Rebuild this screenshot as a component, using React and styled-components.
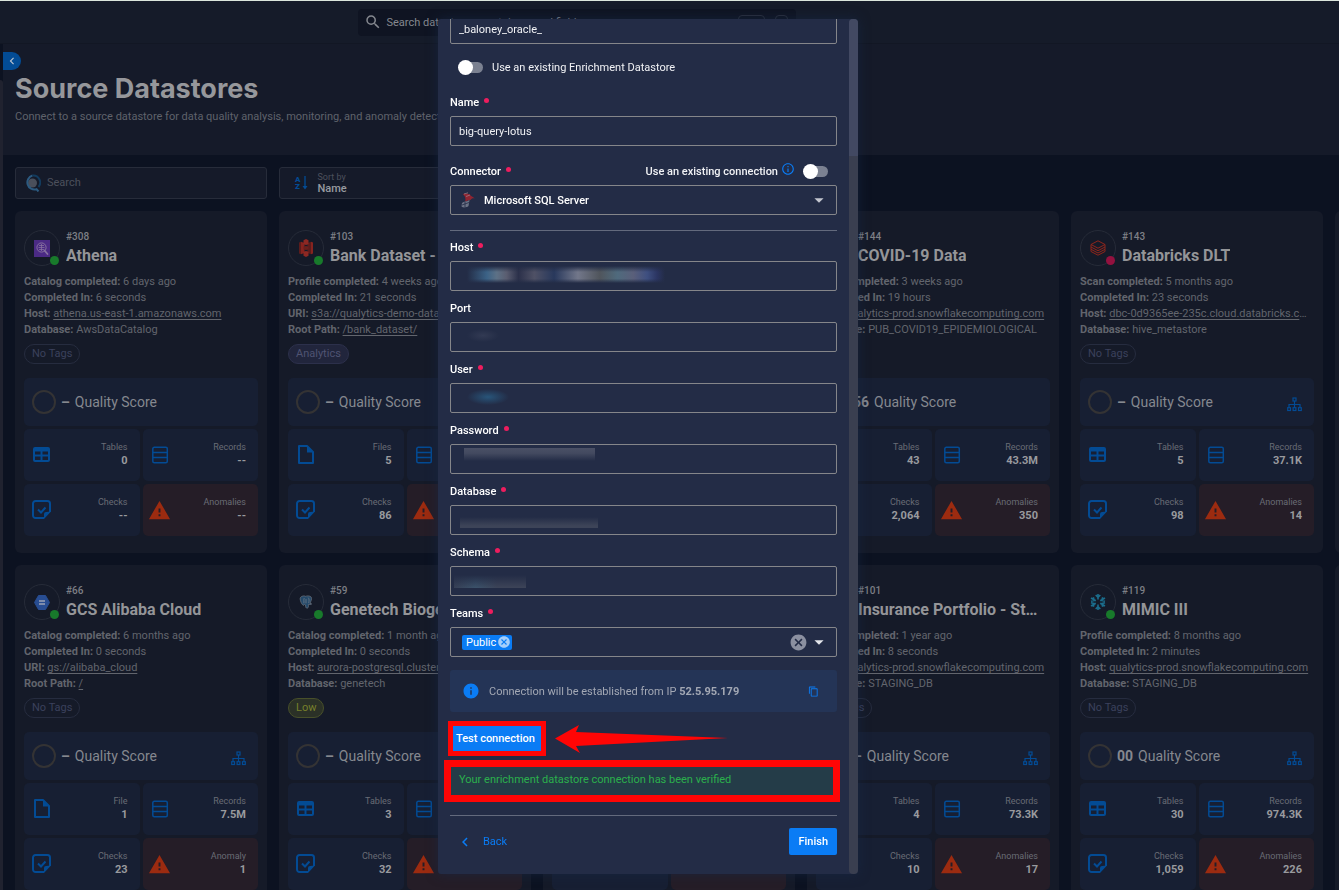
import React, { useState } from 'react'
import styled, { createGlobalStyle, css } from 'styled-components'
import {
  MdArrowDropDown,
  MdCancel,
  MdChevronLeft,
  MdContentCopy,
  MdInfo,
  MdInfoOutline,
  MdSearch,
  MdWarning,
} from 'react-icons/md'

const datastores = [
  {
    id: 308, name: 'Athena', logo: 'athena', status: 'ok', action: 'Catalog', when: '6 days ago', took: '6 seconds',
    lines: [['Host', 'athena.us-east-1.amazonaws.com', true], ['Database', 'AwsDataCatalog']],
    tag: 'No Tags', score: '–', tables: ['Tables', '0'], records: '--', checks: '--', anomalies: ['Anomalies', '--'],
  },
  {
    id: 103, name: 'Bank Dataset - Staging', logo: 's3', status: 'ok', action: 'Profile', when: '4 weeks ago', took: '21 seconds',
    lines: [['URI', 's3a://qualytics-demo-data', true], ['Root Path', '/bank_dataset/', true]],
    tag: 'Analytics', tagKind: 'analytics', score: '–', tables: ['Files', '5'], records: '2.6M', checks: '86', anomalies: ['Anomalies', '12'],
  },
  {
    id: 144, name: 'Consolidated Balance', logo: 'snowflake', status: 'ok', action: 'Profile', when: '3 weeks ago', took: '2 hours',
    lines: [['Host', 'qualytics-prod.snowflakecomputing.com', true], ['Database', 'STAGING_DB']],
    tag: 'No Tags', score: '–', tables: ['Tables', '8'], records: '3.2M', checks: '412', anomalies: ['Anomalies', '9'],
  },
  {
    id: 144, name: 'COVID-19 Data', logo: 'snowflake', status: 'ok', action: 'Scan', when: '3 weeks ago', took: '19 hours',
    lines: [['Host', 'qualytics-prod.snowflakecomputing.com', true], ['Database', 'PUB_COVID19_EPIDEMIOLOGICAL']],
    score: '56', tables: ['Tables', '43'], records: '43.3M', checks: '2,064', anomalies: ['Anomalies', '350'],
  },
  {
    id: 143, name: 'Databricks DLT', logo: 'databricks', status: 'error', action: 'Scan', when: '5 months ago', took: '23 seconds',
    lines: [['Host', 'dbc-0d9365ee-235c.cloud.databricks.com', true], ['Database', 'hive_metastore']],
    tag: 'No Tags', score: '–', linked: true, tables: ['Tables', '5'], records: '37.1K', checks: '98', anomalies: ['Anomalies', '14'],
  },
  null,
  {
    id: 66, name: 'GCS Alibaba Cloud', logo: 'gcs', status: 'ok', action: 'Catalog', when: '6 months ago', took: '0 seconds',
    lines: [['URI', 'gs://alibaba_cloud', true], ['Root Path', '/', true]],
    tag: 'No Tags', score: '–', linked: true, tables: ['File', '1'], records: '7.5M', checks: '23', anomalies: ['Anomaly', '1'],
  },
  {
    id: 59, name: 'Genetech Biogeniuses', logo: 'postgres', status: 'ok', action: 'Catalog', when: '1 month ago', took: '0 seconds',
    lines: [['Host', 'aurora-postgresql.cluster', true], ['Database', 'genetech']],
    tag: 'Low', tagKind: 'low', score: '–', tables: ['Tables', '3'], records: '1.1M', checks: '32', anomalies: ['Anomalies', '4'],
  },
  {
    id: 101, name: 'Human Resources', logo: 'snowflake', status: 'ok', action: 'Profile', when: '1 year ago', took: '5 seconds',
    lines: [['Host', 'qualytics-prod.snowflakecomputing.com', true], ['Database', 'STAGING_DB']],
    tag: 'No Tags', score: '–', tables: ['Tables', '2'], records: '9.4K', checks: '36', anomalies: ['Anomalies', '7'],
  },
  {
    id: 101, name: 'Insurance Portfolio - Staging', logo: 'snowflake', status: 'ok', action: 'Scan', when: '1 year ago', took: '8 seconds',
    lines: [['Host', 'qualytics-prod.snowflakecomputing.com', true], ['Database', 'STAGING_DB']],
    tag: 'No Tags', score: '–', linked: true, tables: ['Tables', '4'], records: '73.3K', checks: '10', anomalies: ['Anomalies', '17'],
  },
  {
    id: 119, name: 'MIMIC III', logo: 'snowflake', status: 'ok', action: 'Profile', when: '8 months ago', took: '2 minutes',
    lines: [['Host', 'qualytics-prod.snowflakecomputing.com', true], ['Database', 'STAGING_DB']],
    tag: 'No Tags', score: '00', linked: true, tables: ['Tables', '30'], records: '974.3K', checks: '1,059', anomalies: ['Anomalies', '226'],
  },
  null,
]

const credentials = [
  { name: 'Host', required: true, mask: 'host' },
  { name: 'Port', mask: 'port' },
  { name: 'User', required: true, mask: 'user' },
  { name: 'Password', required: true, mask: 'password' },
  { name: 'Database', required: true, mask: 'database' },
  { name: 'Schema', required: true, mask: 'schema' },
]

const Logo = ({ kind }) => {
  if (kind === 'athena') {
    return (
      <svg width="16" height="17" viewBox="0 0 16 17" fill="none">
        <rect width="16" height="17" fill="#4b2a85" />
        <circle cx="7.5" cy="7.5" r="4.6" stroke="#86719f" />
        <path d="M5 5.5h5M4.5 7.5h6M5 9.5h5M7.5 4v7" stroke="#86719f" strokeWidth="0.8" />
        <path d="m10.5 10.5 3 3.5" stroke="#86719f" strokeWidth="1.8" strokeLinecap="round" />
      </svg>
    )
  }
  if (kind === 's3') {
    return (
      <svg width="16" height="18" viewBox="0 0 16 18">
        <path d="M1 3.5 3 2.8v12.4l-2-.7z" fill="#5c1c1c" />
        <path d="M3 2.8 6.5 4v10L3 15.2z" fill="#86231f" />
        <path d="m13 2.8 2 .7v11l-2 .7z" fill="#86231f" />
        <path d="M13 2.8 9.500 4v10l3.500 1.200z" fill="#5c1c1c" />
        <path d="M8 0 5.500 1.200v4L8 6l2.500-.8v-4z" fill="#8d2823" />
        <path d="m8 7-2.500.5v3L8 11l2.500-.5v-3z" fill="#6b1f1d" />
        <path d="m8 12-2.500.8v4L8 18l2.500-1.200v-4z" fill="#8d2823" />
      </svg>
    )
  }
  if (kind === 'databricks') {
    return (
      <svg width="16" height="16" viewBox="0 0 16 16" fill="none" stroke="#8f261c" strokeWidth="1">
        <path d="M1 4.500 8 .8l7 3.700-7 3.700z" />
        <path d="M1 4.500v2.500l7 3.700 7-3.700V4.500" />
        <path d="M1 7v2.300l7 3.700 7-3.700V7" />
        <path d="M1 9.300v2.200l7 3.700 7-3.700V9.300" />
      </svg>
    )
  }
  if (kind === 'gcs') {
    return (
      <svg width="16" height="15" viewBox="0 0 16 15">
        <path d="M4.500.5h7l4 7-4 7h-7l-4-7z" fill="#284d92" stroke="#284d92" strokeLinejoin="round" />
        <path d="M5 5.200h6v1.500H5zM5 8.200h6v1.500H5z" fill="#9aa3b5" />
      </svg>
    )
  }
  if (kind === 'postgres') {
    return (
      <svg width="14" height="14" viewBox="0 0 16 16" fill="none">
        <path
          d="M3.500 1.500c1.500-.8 3-.5 4 0 1.500-.6 5-1 6.500 1 1 1.800-.5 5-1.500 7l2 .7c-1 1-2.500.8-3.500.3-.2 2 .2 4-1.500 4.500-1.800.3-2-1.500-2-3.500L6 10.500 5 12C3 10.500 1.500 7 1.300 4.500 1.300 3 2 2 3.500 1.500z"
          fill="#24496a"
          stroke="#6f767f"
          strokeWidth="0.8"
        />
        <path d="M6 3.500c-1 2 0 4-.5 6M10.500 3c1.500 1.500 1 4 .5 6M8 4.500v5" stroke="#7b828b" strokeWidth="0.8" />
      </svg>
    )
  }
  return (
    <svg width="16" height="16" viewBox="0 0 16 16" fill="none" stroke="#1b6d8c" strokeWidth="1.600">
      <path d="M8 5.500V0M5.700 1 8 3.300 10.300 1M8 10.500V16M5.700 15 8 12.700l2.300 2.300" />
      <path d="M5.800 6.700 1 4M1 7.300l3.200-.9-.9-3.200M10.200 9.300 15 12M15 8.700l-3.200.9.9 3.200" />
      <path d="M10.200 6.700 15 4M15 7.300l-3.200-.9.9-3.200M5.800 9.300 1 12M1 8.700l3.200.9-.9 3.200" />
    </svg>
  )
}

const StatIcon = ({ kind }) => {
  if (kind === 'table') {
    return (
      <svg width="20" height="20" viewBox="0 0 20 20" fill="#034b94">
        <path
          fillRule="evenodd"
          d="M3 2h13a2 2 0 0 1 2 2v11a2 2 0 0 1-2 2H3a2 2 0 0 1-2-2V4a2 2 0 0 1 2-2zm0 4.500v3h5.500v-3zm7.500 0v3H16v-3zM3 11.500V15h5.500v-3.500zm7.500 0V15H16v-3.500z"
        />
      </svg>
    )
  }
  if (kind === 'file') {
    return (
      <svg width="20" height="20" viewBox="0 0 20 20" fill="none" stroke="#034b94" strokeWidth="2">
        <path d="M3 1h8l6 6V18H3z" strokeLinejoin="round" />
        <path d="M11 1v6.500h6z" fill="#034b94" stroke="none" />
      </svg>
    )
  }
  if (kind === 'records') {
    return (
      <svg width="20" height="20" viewBox="0 0 20 20" fill="none" stroke="#034b94" strokeWidth="1.500">
        <rect x="1.800" y="2.300" width="14.500" height="15.500" rx="1.500" />
        <path d="M2 7.500h14M2 12.500h14" />
      </svg>
    )
  }
  return (
    <svg width="20" height="20" viewBox="0 0 20 20" fill="none" stroke="#034b94" strokeWidth="2">
      <path d="M18 12V3.500A2.500 2.500 0 0 0 15.500 1h-12A2.500 2.500 0 0 0 1 3.500v12A2.500 2.500 0 0 0 3.500 18H12" />
      <path d="M19 11.500 12 19v-5a2 2 0 0 1 2-2z" fill="#034b94" stroke="none" />
      <path d="m6 9.500 3 3 4.500-5" />
    </svg>
  )
}

const LinkedIcon = () => (
  <svg width="15" height="19" viewBox="0 -4 15 19" fill="none" stroke="#034b94" strokeWidth="1.200">
    <rect x="6" y="1" width="3" height="3" />
    <path d="M7.500 4v7M2 11V7.500h11V11" />
    <rect x="0.700" y="10.700" width="2.800" height="2.800" />
    <rect x="6.100" y="10.700" width="2.800" height="2.800" />
    <rect x="11.500" y="10.700" width="2.800" height="2.800" />
  </svg>
)

const Stat = ({ icon, label, value, alert }) => (
  <StatTile $alert={alert}>
    {alert ? <MdWarning size={23} color="#9c2b10" /> : <StatIcon kind={icon} />}
    <StatText>
      <span>{label}</span>
      <b>{value}</b>
    </StatText>
  </StatTile>
)

const DatastoreCard = ({ store }) => (
  <Card>
    <CardHead>
      <Avatar>
        <Logo kind={store.logo} />
        <StatusDot $status={store.status} />
      </Avatar>
      <CardTitles>
        <CardId>#{store.id}</CardId>
        <CardName>{store.name}</CardName>
      </CardTitles>
    </CardHead>
    <DetailLine>
      <b>{store.action} completed:</b> {store.when}
    </DetailLine>
    <DetailLine>
      <b>Completed In:</b> {store.took}
    </DetailLine>
    {store.lines.map(([label, value, link]) => (
      <DetailLine key={label}>
        <b>{label}:</b> {link ? <a href="#open">{value}</a> : value}
      </DetailLine>
    ))}
    <TagRow>{store.tag && <Tag $kind={store.tagKind}>{store.tag}</Tag>}</TagRow>
    <Tiles>
      <ScoreTile>
        <Ring />
        <b>{store.score}</b>
        <span>Quality Score</span>
        {store.linked && <LinkedIcon />}
      </ScoreTile>
      <Stat icon={store.tables[0].startsWith('File') ? 'file' : 'table'} label={store.tables[0]} value={store.tables[1]} />
      <Stat icon="records" label="Records" value={store.records} />
      <Stat icon="checks" label="Checks" value={store.checks} />
      <Stat alert label={store.anomalies[0]} value={store.anomalies[1]} />
    </Tiles>
  </Card>
)

const App = () => {
  const [name, setName] = useState('big-query-lotus')
  const [useExisting, setUseExisting] = useState(false)
  const [useConnection, setUseConnection] = useState(false)

  return (
    <Page>
      <GlobalStyle />
      <TopBar>
        <GlobalSearch>
          <MdSearch size={18} />
          <span>Search datastores, containers and fields</span>
          <Key $wide>Ctrl</Key>
          <Key>K</Key>
        </GlobalSearch>
      </TopBar>
      <Body>
        <Rail />
        <Main>
          <Hero>
            <CollapseButton aria-label="Collapse">
              <MdChevronLeft size={14} />
            </CollapseButton>
            <h1>Source Datastores</h1>
            <p>Connect to a source datastore for data quality analysis, monitoring, and anomaly detection</p>
          </Hero>
          <Content>
            <CardGrid>
              <FilterBox>
                <svg width="17" height="18" viewBox="0 0 17 18" fill="none">
                  <circle cx="8.500" cy="9" r="4.500" fill="#4a4f5b" />
                  <path d="M8.500 1.500a7 7 0 1 0 4 13.700l2 2.300" stroke="#2c5a80" strokeWidth="2" />
                  <path d="M8.500 1.500a7 7 0 0 1 6 11.500" stroke="#123b5e" strokeWidth="2" />
                </svg>
                <SearchInput type="text" placeholder="Search" aria-label="Search datastores" />
              </FilterBox>
              <FilterBox $sort>
                <AZ>
                  <i>
                    A<br />Z
                  </i>
                  <svg width="6" height="14" viewBox="0 0 6 14" fill="none" stroke="#034b94" strokeWidth="1.300">
                    <path d="M3 0v12" />
                    <path d="M.5 10h5L3 13.500z" fill="#034b94" stroke="none" />
                  </svg>
                </AZ>
                <SortText>
                  <small>Sort by</small>
                  <span>Name</span>
                </SortText>
              </FilterBox>
            </CardGrid>
            <CardGrid>
              {datastores.map((store, index) =>
                store ? <DatastoreCard key={index} store={store} /> : <Card key={index} />
              )}
            </CardGrid>
          </Content>
        </Main>
      </Body>

      <Overlay>
        <Dialog role="dialog" aria-label="Add enrichment datastore">
          <Form>
            <InputBox>
              <TextInput defaultValue="_baloney_oracle_" aria-label="Prefix" />
            </InputBox>
            <ToggleRow>
              <Switch
                id="existing"
                type="checkbox"
                checked={useExisting}
                onChange={(e) => setUseExisting(e.target.checked)}
              />
              <label htmlFor="existing">Use an existing Enrichment Datastore</label>
            </ToggleRow>
            <Field>
              <LabelRow>
                <Label htmlFor="name" $required>Name</Label>
              </LabelRow>
              <InputBox>
                <TextInput id="name" value={name} onChange={(e) => setName(e.target.value)} />
              </InputBox>
            </Field>
            <Field>
              <LabelRow>
                <Label htmlFor="connector" $required>Connector</Label>
                <ConnectionToggle>
                  <label htmlFor="connection">Use an existing connection</label>
                  <MdInfoOutline size={14} color="#0a7cf5" />
                  <Switch
                    id="connection"
                    type="checkbox"
                    checked={useConnection}
                    onChange={(e) => setUseConnection(e.target.checked)}
                  />
                </ConnectionToggle>
              </LabelRow>
              <InputBox>
                <SelectLogo width="14" height="16" viewBox="0 0 14 16" fill="none">
                  <path d="M3 1.500C5 2.500 7 1 9 2.500c.3 1.500 2.500 2 5 4-2.500-.5-3.500.3-4.500 1.500C7.500 8.500 6 8.500 4 9.500 5 8 4.500 4 2 2.500z" fill="#8f2532" />
                  <path d="M3 2 7 .8M5 4.500l4-1.500" stroke="#a4878f" strokeWidth="0.700" />
                  <path d="M1 11c2-1.500 5-1.500 7.500-3l-1 6c-2 1.800-5.500 1.800-7 .5z" fill="#6c7386" />
                  <path d="M1 13 8 10.500M4 10v5.500" stroke="#232c46" strokeWidth="0.800" />
                </SelectLogo>
                <Select id="connector" defaultValue="mssql">
                  <option value="mssql">Microsoft SQL Server</option>
                </Select>
                <MdArrowDropDown size={22} color="#c4c7d0" />
              </InputBox>
            </Field>
            <Divider />
            <Credentials>
              {credentials.map(({ name: label, required, mask }) => (
                <Field key={label}>
                  <LabelRow>
                    <Label htmlFor={label} $required={required}>{label}</Label>
                  </LabelRow>
                  <InputBox>
                    <TextInput id={label} />
                    <Mask $kind={mask} />
                  </InputBox>
                </Field>
              ))}
              <Field>
                <LabelRow>
                  <Label as="span" $required>Teams</Label>
                </LabelRow>
                <InputBox>
                  <TeamChip>
                    Public
                    <IconButton type="button" aria-label="Remove Public">
                      <MdCancel size={14} color="#a6cffb" />
                    </IconButton>
                  </TeamChip>
                  <IconButton type="button" aria-label="Clear teams">
                    <MdCancel size={19} color="#8b90a0" />
                  </IconButton>
                  <MdArrowDropDown size={22} color="#e4e6eb" />
                </InputBox>
              </Field>
            </Credentials>
            <IpNotice>
              <MdInfo size={18} color="#0a7cf5" />
              <span>
                Connection will be established from IP <b>52.5.95.179</b>
              </span>
              <IconButton type="button" aria-label="Copy IP">
                <MdContentCopy size={11} color="#0a7cf5" />
              </IconButton>
            </IpNotice>
            <TestRow>
              <TestButton type="button">Test connection</TestButton>
              <ButtonMark />
              <Arrow width="174" height="28" viewBox="0 0 174 28">
                <path d="M0 13.500 24 0l-3 7L173 13 21 21l4 7z" fill="#ff0505" />
              </Arrow>
            </TestRow>
            <Verified>
              Your enrichment datastore connection has been verified
              <AlertMark />
            </Verified>
            <Divider />
            <Footer>
              <BackButton type="button">
                <MdChevronLeft size={18} />
                Back
              </BackButton>
              <PrimaryButton type="button">Finish</PrimaryButton>
            </Footer>
          </Form>
          <ScrollTrack>
            <ScrollThumb />
          </ScrollTrack>
        </Dialog>
      </Overlay>
    </Page>
  )
}

export default App

const GlobalStyle = createGlobalStyle`
  * {
    box-sizing: border-box;
  }

  body {
    margin: 0;
    background: #0c1221;
    font-family: Roboto, "Liberation Sans", sans-serif;
    font-size: 11px;
  }

  button, input, select {
    font: inherit;
  }

  svg {
    flex: none;
  }
`

const Page = styled.div`
  height: 100vh;
  overflow: hidden;
  display: flex;
  flex-direction: column;
  border-top: 1px solid #dbe6dc;
  color: #74777f;
`

const TopBar = styled.header`
  flex: none;
  display: flex;
  justify-content: center;
  align-items: center;
  height: 43px;
  padding-right: 186px;
  background: #151b29;
  border-bottom: 1px solid #121724;
`

const GlobalSearch = styled.div`
  display: flex;
  align-items: center;
  gap: 5px;
  width: 438px;
  height: 27px;
  padding: 0 8px 0 6px;
  border-radius: 4px;
  background: #0f1422;
  color: #85888f;

  span {
    flex: 1;
  }
`

const Key = styled.kbd`
  width: ${({ $wide }) => ($wide ? 27 : 13)}px;
  height: 15px;
  margin-left: 5px;
  border: 1px solid #2a2f3c;
  border-radius: 4px;
  font-size: 8px;
  line-height: 15px;
  text-align: center;
`

const Body = styled.div`
  flex: 1;
  min-height: 0;
  display: flex;
`

const Rail = styled.div`
  width: 3px;
  margin-top: 36px;
  background: #20222f;
  border-top-right-radius: 3px;
`

const Main = styled.main`
  flex: 1;
  min-width: 0;
  overflow: hidden;
`

const Hero = styled.section`
  height: 111px;
  padding: 8px 12px 0 0;
  background: #151a29;

  h1 {
    margin: 1px 0 0 12px;
    color: #96979b;
    font-family: Inter, Roboto, sans-serif;
    font-size: 27px;
    line-height: 36px;
  }

  p {
    margin: 0 0 0 12px;
    color: #5f626b;
    line-height: 20px;
  }
`

const CollapseButton = styled.button`
  display: flex;
  align-items: center;
  width: 18px;
  height: 18px;
  padding: 0 0 0 2px;
  border: none;
  border-radius: 0 9px 9px 0;
  background: #034c95;
  color: #b9c2cf;
`

const Content = styled.div`
  display: flex;
  flex-direction: column;
  gap: 12px;
  padding: 12px 16px 0 12px;
`

/* five cards fill the row, the sixth runs off the right edge */
const CardGrid = styled.div`
  display: grid;
  grid-template-columns: repeat(6, calc((100% - 48px) / 5));
  gap: 12px;
`

const FilterBox = styled.div`
  display: flex;
  align-items: center;
  gap: ${({ $sort }) => ($sort ? 9 : 4)}px;
  height: 32px;
  padding: 0 ${({ $sort }) => ($sort ? 15 : 8)}px;
  border: 1px solid #272c3a;
  border-radius: 3px;
  background: #151a29;
`

const SearchInput = styled.input`
  flex: 1;
  min-width: 0;
  padding: 0 0 1px 2px;
  border: none;
  outline: none;
  background: none;
  color: #85888f;

  &::placeholder {
    color: #4c505c;
    opacity: 1;
  }
`

const AZ = styled.span`
  display: flex;
  align-items: center;
  gap: 2px;
  color: #034b94;

  i {
    font: 900 8px/7px Roboto, sans-serif;
  }
`

const SortText = styled.span`
  display: flex;
  flex-direction: column;
  padding-bottom: 1px;
  line-height: 11px;
  color: #989aa0;
  font-weight: 500;

  small {
    color: #4c505c;
    font-size: 9px;
    font-weight: 400;
  }
`

const Card = styled.article`
  height: 342px;
  padding: 19px 9px 0;
  border-radius: 6px;
  background: #151a28;
`

const CardHead = styled.div`
  display: flex;
  gap: 6px;
  margin-bottom: 6px;
`

const Avatar = styled.div`
  position: relative;
  flex: none;
  display: flex;
  align-items: center;
  justify-content: center;
  width: 36px;
  height: 36px;
  border: 1px solid #262b38;
  border-radius: 50%;
`

const StatusDot = styled.i`
  position: absolute;
  right: 0;
  bottom: 0;
  width: 9px;
  height: 9px;
  border-radius: 50%;
  background: ${({ $status }) => ($status === 'error' ? '#93113f' : '#187a2b')};
`

const CardTitles = styled.div`
  min-width: 0;
  padding-right: 6px;
`

const CardId = styled.div`
  color: #7d7f85;
  font-size: 10px;
  font-weight: 500;
  line-height: 14px;
`

const CardName = styled.div`
  overflow: hidden;
  color: #949598;
  font-size: 16px;
  font-weight: 700;
  line-height: 24px;
  text-overflow: ellipsis;
  white-space: nowrap;
`

const DetailLine = styled.div`
  overflow: hidden;
  padding-right: 4px;
  color: #62656d;
  line-height: 16px;
  text-overflow: ellipsis;
  white-space: nowrap;

  a {
    color: inherit;
    text-underline-offset: 2px;
  }
`

const TagRow = styled.div`
  height: 20px;
  margin: 6px 0 14px;
`

const tagKinds = {
  analytics: css`
    border-color: #2c304b;
    background: #21253c;
    color: #4f5372;
  `,
  low: css`
    border-color: #48502a;
    background: #2b3127;
    color: #77802b;
  `,
}

const Tag = styled.span`
  display: inline-block;
  padding: 0 7px;
  border: 1px solid #262c3f;
  border-radius: 10px;
  color: #3b415c;
  line-height: 18px;
  ${({ $kind }) => tagKinds[$kind]}
`

const Tiles = styled.div`
  display: grid;
  grid-template-columns: 1fr 1fr;
  gap: 3px;
`

const Tile = styled.div`
  display: flex;
  align-items: center;
  border-radius: 5px;
  background: #171f33;
`

const ScoreTile = styled(Tile)`
  grid-column: span 2;
  gap: 5px;
  height: 48px;
  padding: 0 12px 0 8px;
  color: #85888f;
  font-size: 14px;

  span {
    flex: 1;
  }
`

const Ring = styled.i`
  width: 24px;
  height: 24px;
  border: 2px solid #343334;
  border-radius: 50%;
`

const StatTile = styled(Tile)`
  justify-content: space-between;
  height: 52px;
  padding: 0 12px 0 ${({ $alert }) => ($alert ? 5 : 8)}px;
  ${({ $alert }) => $alert && 'background: #251d27;'}
`

const StatText = styled.div`
  display: flex;
  flex-direction: column;
  align-items: flex-end;
  padding-bottom: 2px;
  color: #696c75;
  font-size: 9px;
  line-height: 13px;

  b {
    color: #999a9e;
    font-size: 11px;
  }
`

const Overlay = styled.div`
  position: fixed;
  inset: 0;
  display: flex;
  justify-content: center;
  padding: 19px 43px 16px 0;
`

const Dialog = styled.div`
  display: flex;
  width: 420px;
  overflow: hidden;
  border-radius: 3px;
  background: #232c46;
  box-shadow: 0 0 12px rgba(24, 42, 74, 0.6);
  color: #f1f2f5;
`

/* the form is taller than the dialog and rests at its scrolled end */
const Form = styled.form`
  flex: 1;
  display: flex;
  flex-direction: column;
  justify-content: flex-end;
  padding: 0 12px 19px;
`

const ScrollTrack = styled.div`
  width: 9px;
  border-radius: 4px;
  background: #3a3f50;
`

const ScrollThumb = styled.div`
  height: 16%;
  border-radius: 4px 4px 0 0;
  background: #424962;
`

const ToggleRow = styled.div`
  display: flex;
  align-items: center;
  gap: 9px;
  height: 19px;
  margin: 16px 0 17px;
  padding-left: 8px;
`

const Switch = styled.input`
  appearance: none;
  position: relative;
  width: 25px;
  height: 15px;
  margin: 0;
  cursor: pointer;

  &::before {
    content: '';
    position: absolute;
    inset: 2px 0 2px 3px;
    border-radius: 6px;
    background: #7b8191;
  }

  &::after {
    content: '';
    position: absolute;
    inset: 0 auto 0 0;
    width: 15px;
    border-radius: 50%;
    background: #fff;
  }

  &:checked::after {
    inset: 0 0 0 auto;
  }
`

const Field = styled.div`
  display: flex;
  flex-direction: column;
  gap: 4px;

  & + & {
    margin-top: 15px;
  }
`

const LabelRow = styled.div`
  display: flex;
  align-items: center;
  justify-content: space-between;
  height: 20px;
`

const Label = styled.label`
  color: #fff;
  font-weight: 500;

  ${({ $required }) =>
    $required &&
    css`
      &::after {
        content: '';
        display: inline-block;
        width: 5px;
        height: 5px;
        margin-left: 5px;
        border-radius: 50%;
        background: #ee1d5e;
        vertical-align: 3px;
      }
    `}
`

const ConnectionToggle = styled.div`
  display: flex;
  align-items: center;
  padding-right: 9px;
  font-weight: 500;

  svg {
    margin: 0 8px 4px 3px;
  }
`

const InputBox = styled.div`
  position: relative;
  flex: none;
  display: flex;
  align-items: center;
  height: 30px;
  padding: 0 6px 0 8px;
  border: 1px solid #85868a;
  border-radius: 2px;
`

const TextInput = styled.input`
  flex: 1;
  min-width: 0;
  padding: 0;
  border: none;
  outline: none;
  background: none;
  color: #f1f2f5;
`

const SelectLogo = styled.svg`
  margin: 0 9px 0 2px;
`

const Select = styled.select`
  appearance: none;
  flex: 1;
  padding: 0;
  border: none;
  outline: none;
  background: none;
  color: #fff;
  font-weight: 500;
`

const masks = {
  host: css`
    inset: 4px auto 7px 16px;
    width: 198px;
    background: linear-gradient(transparent, #232c46 0, transparent 35%, transparent 75%, #232c46),
      linear-gradient(
        90deg, transparent, #3b6286 10%, #5d7186 15%, #5a5d70 20%, #2b304a 26%, #4f5165 34%, #28385c 44%,
        #72778a 56%, #50555c 67%, #4f6a7d 76%, #5a5f7a 84%, #3e4f80 91%, #2b3562 96%, transparent
      );
  `,
  port: css`
    inset: 6px auto 9px 16px;
    width: 32px;
    background: radial-gradient(closest-side, #323a53, transparent);
  `,
  user: css`
    inset: 5px auto 7px 16px;
    width: 42px;
    background: radial-gradient(farthest-side, #28557a, transparent);
  `,
  password: css`
    inset: 3px auto 12px 13px;
    width: 131px;
    background: linear-gradient(#4a5065, #434a60 40%, transparent);
  `,
  database: css`
    inset: 11px auto 6px 9px;
    width: 138px;
    background: linear-gradient(transparent, #3d4458 80%);
  `,
  schema: css`
    inset: 8px auto 7px 3px;
    width: 72px;
    background: linear-gradient(#232c46, transparent), linear-gradient(90deg, #374056, #3c536b 30%, #3d4458 60%);
  `,
}

const Mask = styled.span`
  position: absolute;
  ${({ $kind }) => masks[$kind]}
`

const Divider = styled.hr`
  flex: none;
  width: 100%;
  height: 1px;
  margin: 15px 0 0;
  border: none;
  background: #636a7d;
`

const Credentials = styled.div`
  display: flex;
  flex-direction: column;
  gap: 7px;
  padding-top: 6px;

  ${Field} {
    margin-top: 0;
  }
`

const IconButton = styled.button`
  display: flex;
  padding: 0;
  border: none;
  background: none;
  cursor: pointer;
`

const TeamChip = styled.span`
  display: flex;
  align-items: center;
  gap: 1px;
  height: 15px;
  margin: 0 auto 0 3px;
  padding: 0 1px 0 4px;
  border-radius: 2px;
  background: #0a7cf5;
  color: #fff;
`

const IpNotice = styled.div`
  flex: none;
  display: flex;
  align-items: center;
  gap: 9px;
  height: 42px;
  margin-top: 13px;
  padding: 0 18px 0 12px;
  border-radius: 3px;
  background: #243456;
  color: #a3a8b4;

  span {
    flex: 1;
  }
`

const TestRow = styled.div`
  position: relative;
  align-self: flex-start;
  margin: 12px 0;
`

const PrimaryButton = styled.button`
  height: 27px;
  padding: 0 9px;
  border: none;
  border-radius: 2px;
  background: #0a7cf5;
  color: #fff;
  font-weight: 500;
  cursor: pointer;
`

const TestButton = styled(PrimaryButton)`
  display: block;
  height: 28px;
  padding: 0 9px 0 6px;
`

const Mark = styled.span`
  position: absolute;
  border: 5px solid #ff0505;
  pointer-events: none;
`

const ButtonMark = styled(Mark)`
  inset: -3px -2px -4px;
`

const AlertMark = styled(Mark)`
  inset: -4px -3px -7px -6px;
  border-width: 7px;
`

const Arrow = styled.svg`
  position: absolute;
  left: calc(100% + 11px);
  top: 1px;
`

const Verified = styled.div`
  position: relative;
  flex: none;
  height: 31px;
  margin-bottom: 5px;
  padding-left: 9px;
  background: #243c48;
  color: #2bb04c;
  line-height: 31px;
`

const Footer = styled.div`
  flex: none;
  display: flex;
  align-items: center;
  justify-content: space-between;
  margin-top: 12px;
`

const BackButton = styled.button`
  display: flex;
  align-items: center;
  gap: 9px;
  padding: 0 6px;
  border: none;
  background: none;
  color: #0a7cf5;
  cursor: pointer;
`
